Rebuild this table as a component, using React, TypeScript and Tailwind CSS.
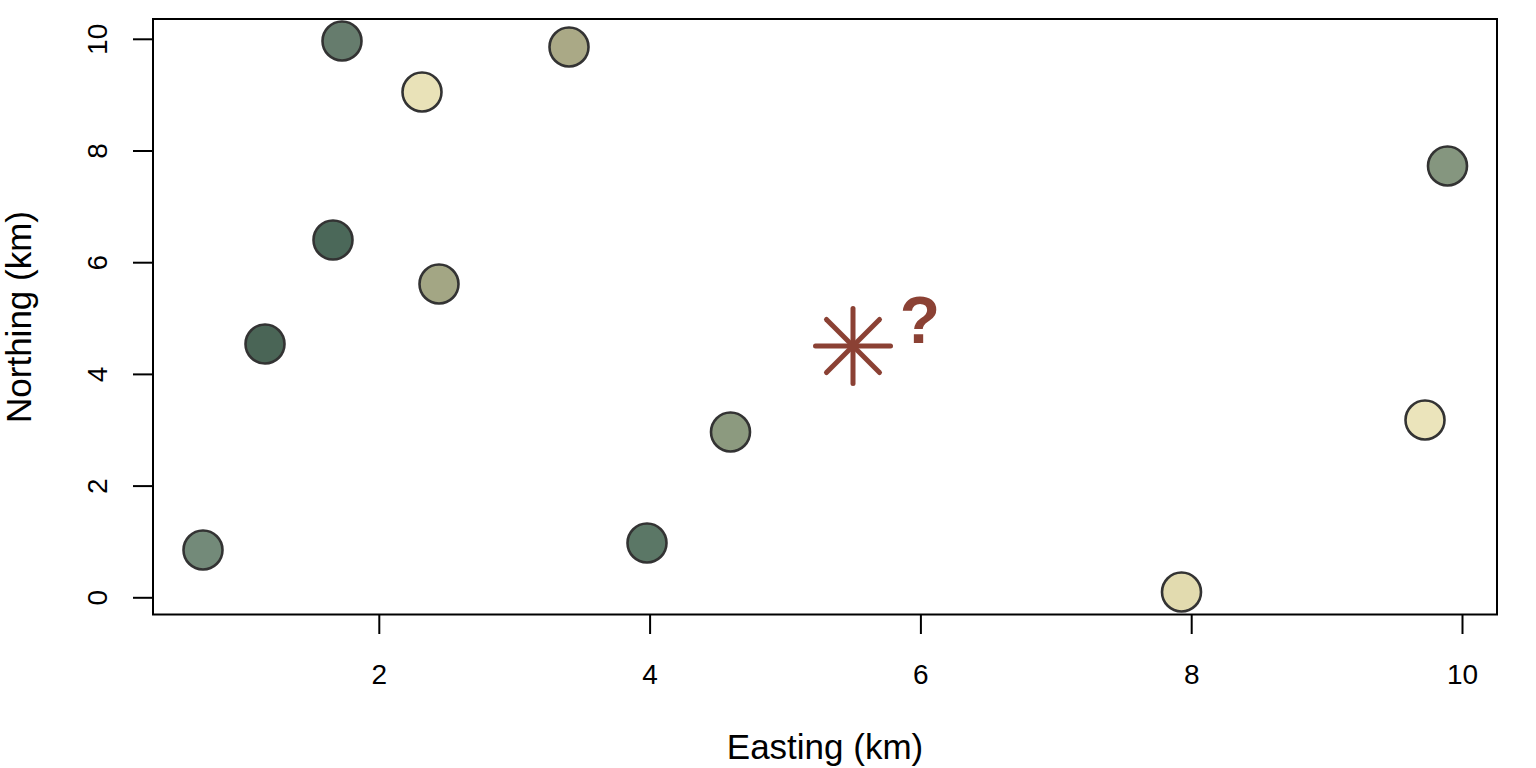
import React from "react";

const pts: { x: number; y: number; c: string }[] = [
  { x: 342, y: 41, c: "#667c6d" },
  { x: 422, y: 92, c: "#e9e2b8" },
  { x: 569, y: 47, c: "#aaa986" },
  { x: 333, y: 240, c: "#4b6859" },
  { x: 439, y: 284, c: "#a3a684" },
  { x: 265, y: 344, c: "#4a6556" },
  { x: 203, y: 550, c: "#738a79" },
  { x: 647, y: 543, c: "#5b7766" },
  { x: 730.5, y: 432, c: "#8c9a7f" },
  { x: 1181.5, y: 592, c: "#e2dbaf" },
  { x: 1425, y: 420, c: "#ebe4bb" },
  { x: 1447.5, y: 166, c: "#85967f" },
];

const yTicks = [0, 2, 4, 6, 8, 10];
const xTicks = [2, 4, 6, 8, 10];
const yPos = (v: number) => 597.8 - v * 55.85;
const xPos = (v: number) => 108.5 + v * 135.4;

export default function App() {
  const cx = 853;
  const cy = 346;
  const a = 37.5;
  const d = a * 0.7071;
  return (
    <div className="w-[1536px] h-[768px] bg-white overflow-hidden font-['Liberation_Sans',Arial,Helvetica,sans-serif]">
      <svg width={1536} height={768} viewBox="0 0 1536 768" className="block">
        <rect x={153} y={19} width={1344} height={595.5} fill="none" stroke="#000" strokeWidth={2} />
        {yTicks.map((v) => (
          <g key={"y" + v}>
            <line x1={133} x2={153} y1={yPos(v)} y2={yPos(v)} stroke="#000" strokeWidth={2} />
            <text
              transform={`translate(107 ${yPos(v)}) rotate(-90)`}
              textAnchor="middle"
              fontSize={28}
              fill="#000"
            >
              {v}
            </text>
          </g>
        ))}
        {xTicks.map((v) => (
          <g key={"x" + v}>
            <line x1={xPos(v)} x2={xPos(v)} y1={614.5} y2={634} stroke="#000" strokeWidth={2} />
            <text x={xPos(v)} y={683.5} textAnchor="middle" fontSize={28} fill="#000">
              {v}
            </text>
          </g>
        ))}
        <text x={825} y={759} textAnchor="middle" fontSize={35} fill="#000">
          Easting (km)
        </text>
        <text
          transform="translate(31 317) rotate(-90)"
          textAnchor="middle"
          fontSize={35}
          fill="#000"
        >
          Northing (km)
        </text>
        {pts.map((p, i) => (
          <circle key={i} cx={p.x} cy={p.y} r={19.5} fill={p.c} stroke="#333" strokeWidth={2.6} />
        ))}
        <g stroke="#8b4134" strokeWidth={5} strokeLinecap="round">
          <line x1={cx - a} y1={cy} x2={cx + a} y2={cy} />
          <line x1={cx} y1={cy - a} x2={cx} y2={cy + a} />
          <line x1={cx - d} y1={cy - d} x2={cx + d} y2={cy + d} />
          <line x1={cx - d} y1={cy + d} x2={cx + d} y2={cy - d} />
        </g>
        <text x={920} y={343} textAnchor="middle" fontSize={66} fontWeight={700} fill="#8b4134">
          ?
        </text>
      </svg>
    </div>
  );
}
